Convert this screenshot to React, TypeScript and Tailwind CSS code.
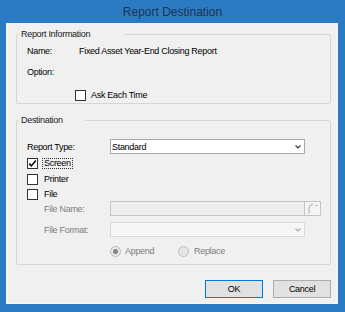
function Check({ checked = false }: { checked?: boolean }) {
  return (
    <span className="flex h-[11px] w-[11px] shrink-0 items-center justify-center border border-[#333333] bg-white">
      {checked ? (
        <svg width="9" height="9" viewBox="0 0 9 9">
          <path d="M1.2 4.6 L3.4 6.9 L7.8 1.6" fill="none" stroke="#000" strokeWidth="1.6" />
        </svg>
      ) : null}
    </span>
  );
}

function Radio({ selected = false }: { selected?: boolean }) {
  return (
    <span className="flex h-[11px] w-[11px] shrink-0 items-center justify-center rounded-full border border-[#bcbcbc] bg-[#e6e6e6]">
      {selected ? <span className="h-[5px] w-[5px] rounded-full bg-[#838383]" /> : null}
    </span>
  );
}

function Chevron({ color }: { color: string }) {
  return (
    <svg width="6" height="4" viewBox="0 0 6 4">
      <path d="M0.5 0.5 L3 3 L5.5 0.5" fill="none" stroke={color} strokeWidth="1.1" />
    </svg>
  );
}

export default function App() {
  return (
    <div className="flex h-[312px] w-[345px] flex-col bg-[#2b7bc4] font-['Liberation_Sans',Arial,sans-serif] text-[9px] leading-[12px] tracking-[-0.3px] text-black">
      <div className="flex h-[23px] items-center justify-center text-[12px] tracking-normal text-[#1d3550]">
        Report Destination
      </div>

      <div className="ml-[6px] flex h-[281px] w-[332px] flex-col border-x border-b border-[#f7f7f7] bg-[#f0f0f0]">
        <fieldset className="ml-[9px] mt-[5px] w-[315px] rounded-[2px] border border-[#d5d5d5]">
          <legend className="ml-[2px] w-[105px] px-[2px] leading-[12px] text-[#1a1a1a]">Report Information</legend>
          <div className="pb-[1px] pl-[10px] pt-[4px]">
            <div className="flex h-[14px] items-center">
              <span className="w-[52px]">Name:</span>
              <span>Fixed Asset Year-End Closing Report</span>
            </div>
            <div className="mt-[7px] flex h-[14px] items-center">
              <span>Option:</span>
            </div>
            <div className="mt-[9px] flex h-[14px] items-center pl-[48px]">
              <Check />
              <span className="ml-[5px]">Ask Each Time</span>
            </div>
          </div>
        </fieldset>

        <fieldset className="ml-[9px] mt-[10px] w-[315px] rounded-[2px] border border-[#d5d5d5]">
          <legend className="ml-[2px] w-[66px] px-[2px] leading-[12px] text-[#1a1a1a]">Destination</legend>
          <div className="pb-[7px] pl-[10px] pt-[13px]">
            <div className="flex h-[15px] items-center">
              <span className="w-[83px]">Report Type:</span>
              <div className="flex h-[15px] w-[195px] items-center justify-between border border-[#a9a9a9] bg-white pl-[1px] pr-[3px]">
                <span>Standard</span>
                <Chevron color="#333333" />
              </div>
            </div>

            <div className="mt-[3px] flex h-[12px] items-center">
              <Check checked />
              <span className="ml-[4px] h-[11px] border border-dotted border-[#333333] px-[1px] leading-[9px]">Screen</span>
            </div>
            <div className="mt-[4px] flex h-[12px] items-center">
              <Check />
              <span className="ml-[6px]">Printer</span>
            </div>
            <div className="mt-[3px] flex h-[12px] items-center">
              <Check />
              <span className="ml-[6px]">File</span>
            </div>

            <div className="mt-[1px] flex h-[15px] items-center pl-[17px] text-[#7d7d7d]">
              <span className="w-[66px]">File Name:</span>
              <div className="h-[15px] w-[195px] border border-[#c4c4c4] bg-[#efefef]" />
              <div className="flex h-[15px] w-[16px] items-center justify-center border border-l-0 border-[#c4c4c4] bg-[#f4f4f4]">
                <svg width="12" height="11" viewBox="0 0 12 11">
                  <path d="M2 10.5 L2 5 Q2 1.5 6 1.5" fill="none" stroke="#a8a8a8" strokeWidth="1" />
                  <path d="M8.5 2.5 L10.5 2.5" fill="none" stroke="#a8a8a8" strokeWidth="1" />
                </svg>
              </div>
            </div>

            <div className="mt-[6px] flex h-[15px] items-center pl-[17px] text-[#7d7d7d]">
              <span className="w-[66px]">File Format:</span>
              <div className="flex h-[15px] w-[195px] items-center justify-end border border-[#d9d9d9] bg-[#f6f6f6] pr-[3px]">
                <Chevron color="#a5a5a5" />
              </div>
            </div>

            <div className="mt-[8px] flex h-[12px] items-center pl-[83px] text-[#7d7d7d]">
              <div className="flex w-[68px] items-center">
                <Radio selected />
                <span className="ml-[4px]">Append</span>
              </div>
              <div className="flex items-center">
                <Radio />
                <span className="ml-[5px]">Replace</span>
              </div>
            </div>
          </div>
        </fieldset>

        <div className="mt-[15px] flex justify-end gap-[10px] pr-[6px]">
          <button className="flex h-[18px] w-[58px] items-center justify-center border border-[#0078d7] bg-[#e1e1e1]">
            OK
          </button>
          <button className="flex h-[18px] w-[58px] items-center justify-center border border-[#adadad] bg-[#e1e1e1]">
            Cancel
          </button>
        </div>
      </div>
    </div>
  );
}
